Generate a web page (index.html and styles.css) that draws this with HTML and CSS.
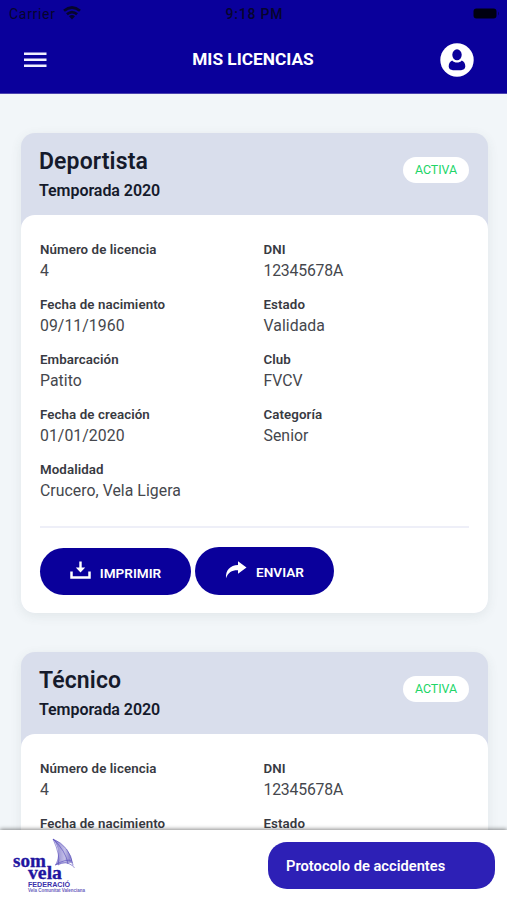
FILE: index.html
```html
<!DOCTYPE html>
<html lang="es">
<head>
<meta charset="utf-8">
<meta name="viewport" content="width=device-width, initial-scale=1">
<title>Mis licencias</title>
<link rel="stylesheet" href="styles.css">
</head>
<body>
<div class="app">
  <header class="header">
    <div class="status">
      <div class="carrier"><span>Carrier</span>
        <svg width="18" height="14" viewBox="0 0 18 14" fill="none" stroke="currentColor" stroke-width="2.7"><path d="M1 4.8Q9-1.800 17 4.800M3.900 8.300Q9 3.900 14.100 8.300"/><path d="M9 13.500 6 10.300Q9 7.900 12 10.300Z" fill="currentColor" stroke="none"/></svg>
      </div>
      <span class="time">9:18 PM</span>
      <svg class="battery" width="27" height="11" viewBox="0 0 27 11"><rect x=".5" y=".5" width="23" height="10" rx="3" fill="currentColor"/><path d="M25 3.500q2 2 0 4z" fill="currentColor" opacity=".5"/></svg>
    </div>
    <nav class="nav">
      <svg class="menu" width="24" height="16" viewBox="0 0 24 16" fill="#f1efff"><path d="M1 .4h22.500v2.500H1zM1 6.500h22.500V9H1zM1 12.600h22.500v2.500H1z"/></svg>
      <h1 class="title">MIS LICENCIAS</h1>
      <svg class="user" width="34" height="34" viewBox="0 0 34 34"><circle cx="17" cy="17" r="16.700" fill="#fff"/><ellipse cx="17" cy="11.800" rx="4.700" ry="5.500" fill="#0a009b"/><path d="M12.200 17.500c2.300 2.800 7.300 2.800 9.600 0 2.300.8 3.500 3.200 3.500 6.100 0 2.300-2 3.600-4.200 3.600h-8.200c-2.200 0-4.200-1.300-4.200-3.600 0-2.900 1.200-5.300 3.500-6.100Z" fill="#0a009b"/></svg>
    </nav>
  </header>

  <main class="content">
    <article class="card">
      <div class="card-head">
        <div>
          <h2 class="card-title">Deportista</h2>
          <p class="season">Temporada 2020</p>
        </div>
        <span class="badge">ACTIVA</span>
      </div>
      <div class="card-body">
        <dl class="fields">
          <div><dt>Número de licencia</dt><dd>4</dd></div>
          <div><dt>DNI</dt><dd class="dni">12345678A</dd></div>
          <div><dt>Fecha de nacimiento</dt><dd>09/11/1960</dd></div>
          <div><dt>Estado</dt><dd>Validada</dd></div>
          <div><dt>Embarcación</dt><dd>Patito</dd></div>
          <div><dt>Club</dt><dd>FVCV</dd></div>
          <div><dt>Fecha de creación</dt><dd>01/01/2020</dd></div>
          <div><dt>Categoría</dt><dd>Senior</dd></div>
          <div><dt>Modalidad</dt><dd>Crucero, Vela Ligera</dd></div>
        </dl>
        <div class="actions">
          <button class="button print">
            <svg width="21" height="18" viewBox="0 0 21 18"><path d="M1.500 10.500v6h18v-6" fill="none" stroke="#fff" stroke-width="2.500"/><path d="M9.300.4h2.400v6h3.500l-4.700 5.200-4.700-5.200h3.500z" fill="#fff"/></svg>
            <span>IMPRIMIR</span>
          </button>
          <button class="button send">
            <svg width="22" height="18" viewBox="0 0 22 18" fill="#fff"><path d="M13 .3 21.500 6.600 13 12.700V9.200C7 9 3.300 11 1 17.300.4 9 5.300 4.200 13 3.900Z"/></svg>
            <span>ENVIAR</span>
          </button>
        </div>
      </div>
    </article>

    <article class="card">
      <div class="card-head">
        <div>
          <h2 class="card-title">Técnico</h2>
          <p class="season">Temporada 2020</p>
        </div>
        <span class="badge">ACTIVA</span>
      </div>
      <div class="card-body">
        <dl class="fields">
          <div><dt>Número de licencia</dt><dd>4</dd></div>
          <div><dt>DNI</dt><dd class="dni">12345678A</dd></div>
          <div><dt>Fecha de nacimiento</dt></div>
          <div><dt>Estado</dt></div>
        </dl>
      </div>
    </article>
  </main>

  <footer class="footer">
    <svg class="logo" width="80" height="58" viewBox="0 0 80 58" role="img" aria-label="Som Vela">
      <defs><linearGradient id="sail" x1="0" x2="1"><stop stop-color="#4a3eb5"/><stop offset=".6" stop-color="#aaa4dc"/><stop offset="1" stop-color="#3429a5"/></linearGradient></defs>
      <path d="M40 0C52 5 58 14 59.500 24 54 23.500 48 24.500 42 26.500 47 17 46 8 40 0Z" fill="url(#sail)" opacity=".7"/>
      <g fill="none" stroke="#4b3fb5" stroke-width=".55"><path d="M40 0Q57 7 60 26M40 0Q53 12 55 25M40 0Q48 17 45 26M45 26Q52 21 60 27M42 26Q54 19 59 22"/><path d="M60 27 61.500 29M57 19Q59 26 61.500 29" stroke="#a19bdb"/></g>
      <g class="logo-word"><text x="0" y="27.500" textLength="33" lengthAdjust="spacingAndGlyphs">som</text><text x="15" y="39.500" textLength="34" lengthAdjust="spacingAndGlyphs">vela</text></g>
      <text class="logo-fed" x="15" y="47.700" textLength="42" lengthAdjust="spacingAndGlyphs">FEDERACIÓ</text>
      <text class="logo-small" x="15" y="53" textLength="57" lengthAdjust="spacingAndGlyphs">Vela Comunitat Valenciana</text>
    </svg>
    <button class="protocol">Protocolo de accidentes</button>
  </footer>
</div>
</body>
</html>
```
FILE: styles.css
```css
* { box-sizing: border-box; }
body, h1, h2, p, dl, dd { margin: 0; }
body {
  font-family: Roboto, "Liberation Sans", sans-serif;
  background: #f2f6f9;
  overflow: hidden;
}
.app {
  height: 900px;
  display: flex;
  flex-direction: column;
}
.header {
  height: 94px;
  flex: none;
  background: #0a009b;
  border-bottom: 1px solid #4c44b0;
}
.status {
  height: 27px;
  padding: 0 7px 0 9px;
  display: grid;
  grid-template-columns: 1fr auto 1fr;
  align-items: center;
  color: #06052d;
  font-size: 14px;
}
.carrier {
  display: flex;
  align-items: center;
  gap: 7px;
  letter-spacing: .7px;
}
.carrier svg { margin-top: -2px; }
.time { font-weight: 500; letter-spacing: .8px; }
.battery { justify-self: end; color: #000010; }
.nav {
  height: 65px;
  padding: 0 33px 0 23px;
  display: grid;
  grid-template-columns: 1fr auto 1fr;
  align-items: center;
}
.title {
  color: #fff;
  font-size: 17.3px;
  line-height: 20px;
  font-weight: 700;
  margin-right: -9px;
  margin-top: -2px;
}
.user { justify-self: end; }
.content {
  flex: 1;
  min-height: 0;
  overflow: hidden;
  padding: 39px 19.500px 0 20.500px;
}
.card {
  height: 480px;
  margin-bottom: 39px;
  background: #d9deec;
  border-radius: 14px;
  box-shadow: 0 3px 12px rgba(60, 80, 80, .09);
}
.card-head {
  height: 81.500px;
  padding: 15px 18.500px 0 18.500px;
  display: flex;
  justify-content: space-between;
}
.card-title {
  color: #151a2b;
  font-size: 23px;
  line-height: 28px;
  font-weight: 600;
  letter-spacing: .12px;
}
.season {
  color: #151a2b;
  font-size: 16px;
  line-height: 20px;
  font-weight: 600;
  letter-spacing: -.05px;
  margin-top: 5px;
}
.badge {
  width: 66px;
  height: 26px;
  margin-top: 9px;
  border-radius: 13px;
  background: #fff;
  color: #20d567;
  font-size: 12.4px;
  line-height: 26px;
  text-align: center;
}
.card-body {
  height: 398.500px;
  padding: 25px 19px 0 19.500px;
  background: #fff;
  border-radius: 14px;
}
.fields {
  display: grid;
  grid-template-columns: 223.500px 1fr;
  grid-auto-rows: 55px;
}
.fields dt {
  color: #383a42;
  font-size: 13.3px;
  line-height: 20px;
  font-weight: 600;
  letter-spacing: .09px;
}
.fields dd {
  color: #45474d;
  font-size: 15.8px;
  line-height: 22px;
  letter-spacing: .05px;
}
.fields .dni { letter-spacing: -.2px; }
.actions {
  height: 69px;
  margin-top: 11px;
  border-top: 2px solid #eeeff8;
  display: flex;
  align-items: flex-end;
  gap: 4px;
}
.button {
  border: 0;
  padding: 3px 0 0;
  display: flex;
  align-items: center;
  justify-content: center;
  flex: none;
  gap: 9px;
  border-radius: 24px;
  background: #0a009b;
  color: #fff;
  font: 600 13.6px/20px Roboto, sans-serif;
}
.button svg { margin-top: -5px; }
.print { width: 151px; height: 47px; }
.send { width: 139px; height: 48px; }
.footer {
  height: 70px;
  flex: none;
  position: relative;
  background: #fff;
  box-shadow: 0 -1px 4px rgba(0, 0, 0, .45);
  display: flex;
  align-items: center;
  justify-content: space-between;
  padding: 0 12.500px;
}
.logo { margin-top: 5px; overflow: visible; }
.logo-word {
  fill: #2115a0;
  stroke: #2115a0;
  stroke-width: .3px;
  font: 700 19px "Liberation Serif", serif;
}
.logo-fed {
  fill: #3b30ab;
  font: 700 7px "Liberation Sans", sans-serif;
}
.logo-small {
  fill: #6a60bd;
  font: 700 4.5px "Liberation Sans", sans-serif;
}
.protocol {
  width: 227px;
  height: 47px;
  border: 0;
  border-radius: 19px;
  background: #2d20b6;
  color: #fff;
  text-align: left;
  padding: 2px 18.500px 0;
  font: 600 14.7px/20px Roboto, sans-serif;
}
```
